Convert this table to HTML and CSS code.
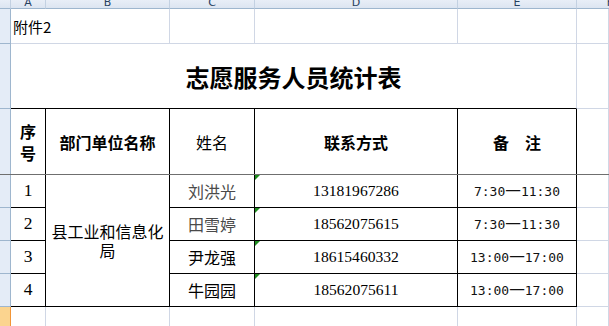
FILE: index.html
```html
<!DOCTYPE html>
<html lang="zh-CN">
<head>
<meta charset="utf-8">
<title>志愿服务人员统计表</title>
<link rel="stylesheet" href="styles.css">
</head>
<body>
<div class="sheet">
  <!-- column headers -->
  <div class="corner"></div>
  <div class="ch">A</div>
  <div class="ch">B</div>
  <div class="ch">C</div>
  <div class="ch">D</div>
  <div class="ch">E</div>
  <div class="ch edge">F</div>

  <!-- row 1 -->
  <div class="rh"></div>
  <div class="c a1">附件2</div>
  <div class="c"></div>
  <div class="c"></div>
  <div class="c"></div>
  <div class="c"></div>
  <div class="c"></div>

  <!-- row 2 -->
  <div class="rh"></div>
  <div class="c title">志愿服务人员统计表</div>
  <div class="c"></div>

  <!-- row 3 -->
  <div class="rh"></div>
  <div class="c t th two">序<br>号</div>
  <div class="c t th">部门单位名称</div>
  <div class="c t th normal">姓名</div>
  <div class="c t th">联系方式</div>
  <div class="c t th">备　注</div>
  <div class="c"></div>

  <!-- row 4 -->
  <div class="rh"></div>
  <div class="c t num">1</div>
  <div class="c t dept">县工业和信息化<br>局</div>
  <div class="c t name light">刘洪光</div>
  <div class="c t phone tri">13181967286</div>
  <div class="c t time">7:30<span class="dash">一</span>11:30</div>
  <div class="c"></div>

  <!-- row 5 -->
  <div class="rh"></div>
  <div class="c t num">2</div>
  <div class="c t name light">田雪婷</div>
  <div class="c t phone tri">18562075615</div>
  <div class="c t time">7:30<span class="dash">一</span>11:30</div>
  <div class="c"></div>

  <!-- row 6 -->
  <div class="rh"></div>
  <div class="c t num">3</div>
  <div class="c t name">尹龙强</div>
  <div class="c t phone tri">18615460332</div>
  <div class="c t time">13:00<span class="dash">一</span>17:00</div>
  <div class="c"></div>

  <!-- row 7 -->
  <div class="rh"></div>
  <div class="c t num">4</div>
  <div class="c t name">牛园园</div>
  <div class="c t phone tri">18562075611</div>
  <div class="c t time">13:00<span class="dash">一</span>17:00</div>
  <div class="c"></div>

  <!-- row 8 -->
  <div class="rh sel"></div>
  <div class="c last"></div>
  <div class="c last"></div>
  <div class="c last"></div>
  <div class="c last"></div>
  <div class="c last"></div>
  <div class="c last"></div>

  <div class="freeze"></div>
</div>
</body>
</html>
```

FILE: styles.css
```css
html, body {
  margin: 0;
  padding: 0;
}

body {
  width: 609px;
  height: 326px;
  overflow: hidden;
  background: #ffffff;
  font-family: "Noto Sans CJK SC", sans-serif;
  color: #000000;
}

.sheet {
  position: relative;
  display: grid;
  grid-template-columns: 11px 35px 124px 85px 203px 119px 1fr;
  grid-template-rows: 9px 35px 65px 66px 33px 33px 33px 33px 1fr;
  width: 609px;
  height: 326px;
  overflow: hidden;
}

.corner,
.ch {
  box-sizing: border-box;
  background: linear-gradient(#e8eef7, #dce5f1);
  border-right: 1px solid #c3d1e2;
  border-bottom: 1px solid #9eb6ce;
}

.ch {
  display: flex;
  align-items: flex-end;
  justify-content: center;
  overflow: hidden;
  font-family: "DejaVu Sans", sans-serif;
  font-size: 11px;
  line-height: 11px;
  color: #27415f;
}

.ch.edge {
  justify-content: flex-end;
  margin-right: -4px;
  border-right: none;
}

.rh {
  box-sizing: border-box;
  background: #e4ecf7;
  border-right: 1px solid #9eb6ce;
  border-bottom: 1px solid #9eb6ce;
}

.rh.sel {
  background: #fbd48f;
  border-right-color: #f29536;
  border-bottom: none;
}

.c {
  box-sizing: border-box;
  position: relative;
  display: flex;
  align-items: center;
  justify-content: center;
  text-align: center;
  border-right: 1px solid #d0d7e5;
  border-bottom: 1px solid #d0d7e5;
  font-size: 16px;
  line-height: 1;
}

.c.last {
  border-bottom: none;
}

.t {
  border-right-color: #000000;
  border-bottom-color: #000000;
}

.a1 {
  justify-content: flex-start;
  padding-left: 2px;
  border-right: none;
  white-space: nowrap;
  font-size: 15px;
}

.title {
  grid-column: span 5;
  border-bottom-color: #000000;
  font-size: 24px;
  font-weight: 700;
  padding-top: 2px;
}

.th {
  font-weight: 700;
}

.th.normal {
  font-weight: 400;
}

.two {
  line-height: 22px;
}

.num {
  font-family: "Liberation Serif", serif;
  font-size: 17.5px;
}

.dept {
  grid-row: span 4;
  line-height: 19px;
}

.name.light {
  color: #4a4a4a;
}

.phone {
  font-family: "Liberation Serif", serif;
  font-size: 15.6px;
}

.tri::before {
  content: "";
  position: absolute;
  left: 0;
  top: 0;
  border-top: 5px solid #1e8c1e;
  border-right: 5px solid transparent;
}

.time {
  font-family: "DejaVu Sans Mono", monospace;
  font-size: 13px;
  color: #111111;
}

.dash {
  font-family: "Noto Sans CJK SC", sans-serif;
  font-size: 15.6px;
  line-height: 1;
}

.freeze {
  position: absolute;
  left: 0;
  right: 0;
  top: 174px;
  height: 1px;
  background: #6f6f6f;
}
```
